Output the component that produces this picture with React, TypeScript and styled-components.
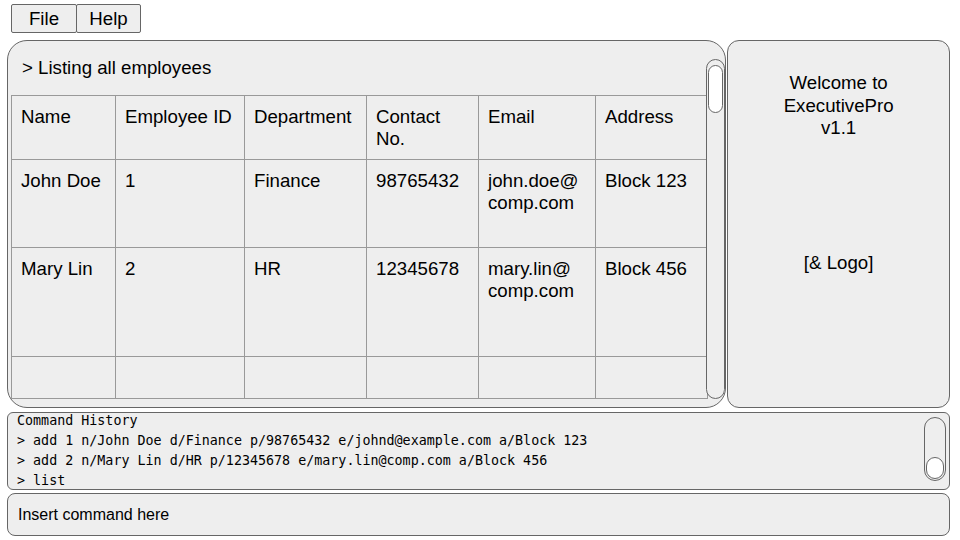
import React from 'react'
import styled, { createGlobalStyle } from 'styled-components'

const Global = createGlobalStyle`
  html, body {
    margin: 0;
    padding: 0;
    background: #fff;
  }
  body {
    font-family: "Liberation Sans", Arial, sans-serif;
    color: #000;
  }
`

const Page = styled.div`
  width: 960px;
  height: 540px;
  box-sizing: border-box;
  padding: 4px 10px 0 7px;
  display: flex;
  flex-direction: column;
`

const MenuBar = styled.div`
  display: flex;
  padding-left: 4px;
  height: 29px;
  margin-bottom: 7px;
`

const MenuButton = styled.div<{ $w: number }>`
  width: ${p => p.$w}px;
  height: 29px;
  box-sizing: border-box;
  border: 1px solid #666;
  border-radius: 2px;
  background: #eee;
  font-size: 18.67px;
  line-height: 28px;
  text-align: center;
  & + & {
    margin-left: -1px;
  }
`

const Main = styled.div`
  display: flex;
  height: 368px;
  gap: 1px;
`

const ListPanel = styled.div`
  width: 720px;
  box-sizing: border-box;
  border: 1px solid #666;
  border-radius: 20px;
  background: #eee;
  display: flex;
  overflow: hidden;
`

const ListBody = styled.div`
  flex: 1;
  padding-left: 3px;
  display: flex;
  flex-direction: column;
`

const ListTitle = styled.div`
  height: 54px;
  line-height: 54px;
  padding-left: 11px;
  font-size: 18.67px;
`

const Table = styled.table`
  border-collapse: collapse;
  table-layout: fixed;
  width: 696px;
  font-size: 18.67px;
  line-height: 22px;
`

const Cell = styled.td<{ $h?: number }>`
  border: 1px solid #999;
  vertical-align: top;
  padding: 10px 9px 0 9px;
  height: ${p => (p.$h ? p.$h - 11 : 0)}px;
  box-sizing: content-box;
`

const Track = styled.div<{ $w: number }>`
  width: ${p => p.$w}px;
  box-sizing: border-box;
  border: 1px solid #666;
  border-radius: ${p => p.$w / 2}px;
  position: relative;
`

const ListTrack = styled(Track)`
  margin: 18px 0 8px -2px;
  background: #eee;
`

const Thumb = styled.div<{ $top?: number; $bottom?: number; $h: number }>`
  position: absolute;
  left: 1px;
  right: 1px;
  ${p => (p.$top !== undefined ? `top: ${p.$top}px;` : '')}
  ${p => (p.$bottom !== undefined ? `bottom: ${p.$bottom}px;` : '')}
  height: ${p => p.$h}px;
  box-sizing: border-box;
  border: 1px solid #666;
  border-radius: 9px;
  background: #fff;
`

const WelcomePanel = styled.div`
  width: 223px;
  box-sizing: border-box;
  border: 1px solid #666;
  border-radius: 12px;
  background: #eee;
  text-align: center;
  font-size: 18.67px;
  line-height: 22.5px;
  padding-top: 31px;
`

const Logo = styled.div`
  margin-top: 112px;
`

const HistoryPanel = styled.div`
  margin-top: 4px;
  height: 78px;
  box-sizing: border-box;
  border: 1px solid #666;
  border-radius: 6px;
  background: #eee;
  display: flex;
  overflow: hidden;
`

const HistoryText = styled.div`
  flex: 1;
  padding-left: 9px;
  margin-top: -2px;
  font-family: "DejaVu Sans Mono", "Liberation Mono", monospace;
  font-size: 13.35px;
  line-height: 20px;
  white-space: pre;
`

const HistoryTrack = styled(Track)`
  margin: 4px 3px 8px 0;
`

const InputBox = styled.div`
  margin-top: 3px;
  height: 43px;
  box-sizing: border-box;
  border: 1px solid #666;
  border-radius: 8px;
  background: #eee;
  padding-left: 10px;
  font-size: 16px;
  line-height: 42px;
`

const cols = [104, 129, 122, 112, 117, 112]

const rows: { h: number; cells: React.ReactNode[] }[] = [
  {
    h: 64,
    cells: ['Name', 'Employee ID', 'Department', 'Contact No.', 'Email', 'Address'],
  },
  {
    h: 88,
    cells: [
      'John Doe',
      '1',
      'Finance',
      '98765432',
      <>john.doe@<wbr />comp.com</>,
      'Block 123',
    ],
  },
  {
    h: 109,
    cells: [
      'Mary Lin',
      '2',
      'HR',
      '12345678',
      <>mary.lin@<wbr />comp.com</>,
      'Block 456',
    ],
  },
  { h: 42, cells: ['', '', '', '', '', ''] },
]

const history = [
  'Command History',
  '> add 1 n/John Doe d/Finance p/98765432 e/johnd@example.com a/Block 123',
  '> add 2 n/Mary Lin d/HR p/12345678 e/mary.lin@comp.com a/Block 456',
  '> list',
]

const App: React.FC = () => {
  return (
    <>
      <Global />
      <Page>
        <MenuBar>
          <MenuButton $w={66}>File</MenuButton>
          <MenuButton $w={65}>Help</MenuButton>
        </MenuBar>
        <Main>
          <ListPanel>
            <ListBody>
              <ListTitle>&gt; Listing all employees</ListTitle>
              <Table>
                <colgroup>
                  {cols.map((w, i) => (
                    <col key={i} style={{ width: w }} />
                  ))}
                </colgroup>
                <tbody>
                  {rows.map((r, i) => (
                    <tr key={i}>
                      {r.cells.map((c, j) => (
                        <Cell key={j} $h={r.h}>
                          {c}
                        </Cell>
                      ))}
                    </tr>
                  ))}
                </tbody>
              </Table>
            </ListBody>
            <ListTrack $w={19}>
              <Thumb $top={5} $h={48} />
            </ListTrack>
          </ListPanel>
          <WelcomePanel>
            Welcome to
            <br />
            ExecutivePro
            <br />
            v1.1
            <Logo>[&amp; Logo]</Logo>
          </WelcomePanel>
        </Main>
        <HistoryPanel>
          <HistoryText>{history.join('\n')}</HistoryText>
          <HistoryTrack $w={22}>
            <Thumb $bottom={1} $h={22} />
          </HistoryTrack>
        </HistoryPanel>
        <InputBox>Insert command here</InputBox>
      </Page>
    </>
  )
}

export default App
